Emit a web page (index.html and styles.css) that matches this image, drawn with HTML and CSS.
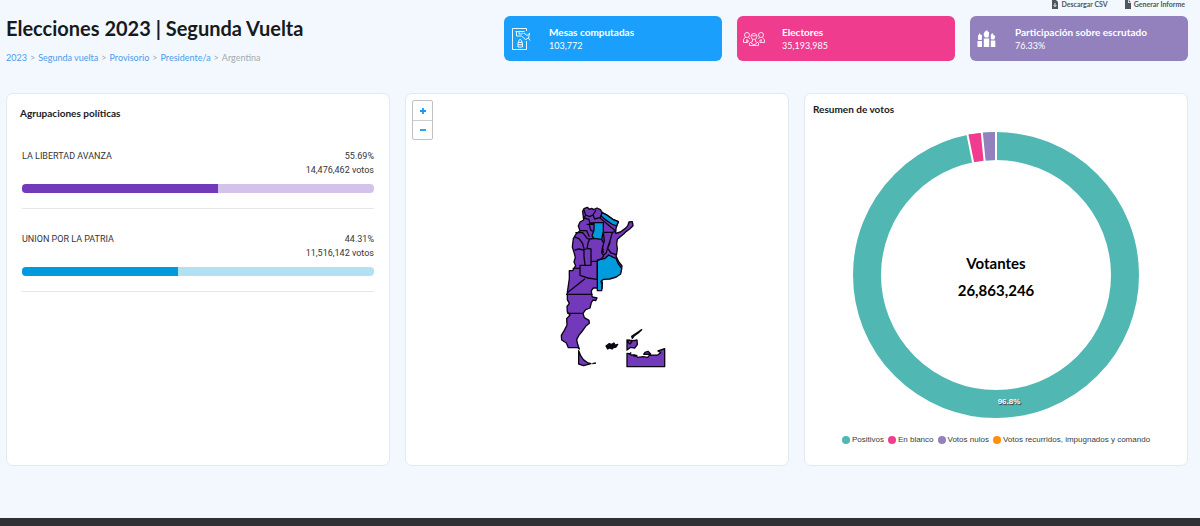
FILE: index.html
```html
<!DOCTYPE html>
<html lang="es">
<head>
<meta charset="utf-8">
<meta name="viewport" content="width=device-width, initial-scale=1">
<title>Elecciones 2023 | Segunda Vuelta</title>
<link rel="stylesheet" href="styles.css">
</head>
<body>
<div class="page">
  <header class="header">
    <div class="heading">
      <h1 class="title">Elecciones 2023 | Segunda Vuelta</h1>
      <nav class="crumbs" aria-label="Ruta">
        <a href="#">2023</a><span>&gt;</span><a href="#">Segunda vuelta</a><span>&gt;</span><a href="#">Provisorio</a><span>&gt;</span><a href="#">Presidente/a</a><span>&gt;</span><span>Argentina</span>
      </nav>
    </div>
    <div class="summary">
      <div class="actions">
        <button class="action" type="button">
          <svg width="8" height="9" viewBox="0 0 8 9"><path fill="#50565c" d="M1 0h4l2 2v7H1z"/><path fill="none" stroke="#fff" stroke-width=".9" d="M4 3v3.500M2.600 5.200L4 6.600 5.400 5.200"/></svg>
          Descargar CSV
        </button>
        <button class="action" type="button">
          <svg width="8" height="9" viewBox="0 0 8 9"><path fill="#50565c" d="M1 0h3v3h3v6H1zM4.700 0L7 2.300H4.700z"/></svg>
          Generar Informe
        </button>
      </div>
      <div class="stats">
        <section class="stat stat-blue">
          <svg class="stat-icon" width="24" height="24" viewBox="-1 0 24 24" fill="none" stroke="#fff" stroke-width=".9"><path d="M16.500 4V1.500H2.500v21h14V14M5.500 4.500h9M6.500 4.500v4.500h5M9 5v2h3M12 5.500l1.500 1.500M11.500 9l4 3.500 3-1.500 1-4M14 6l3 2.500 3-2.500M18.500 11l1.500 2.500"/><path d="M8 15.500h4.400v4.500H8zM8.700 15.500v-1.500l1.500-2 1.500 2v1.500M8 17.700h4.400"/></svg>
          <div><h2>Mesas computadas</h2><p>103,772</p></div>
        </section>
        <section class="stat stat-pink">
          <svg class="stat-icon" width="24" height="24" viewBox="0 0 24 24" fill="none" stroke="#fff" stroke-width=".8"><circle cx="5" cy="8" r="2.500"/><circle cx="19" cy="8" r="2.500"/><circle cx="12" cy="9.500" r="3"/><path d="M3.500 10l-2 2.500v3H6M6.500 10.500l1.500 1.500M17.500 10.500L16.500 12M20.500 10.500l2 2.500v2.500h-5M10.500 12.500v2L7.500 16v2.500h9V16l-3-1.500v-2M9 16l3 2 3-2M5 12v3M19 12v2M9.500 8.500l2 .5 3-.5M4 14h3M17 14h3"/></svg>
          <div><h2>Electores</h2><p>35,193,985</p></div>
        </section>
        <section class="stat stat-purple">
          <svg class="stat-icon" width="24" height="24" viewBox="0 0 24 24" fill="#fff"><path d="M3 12V8.500l1-1v-1h1.200v1L7 8v3.500L6.500 13H3.500zM2.500 14h4.500v6H2.500zM8.800 8.500V6l1-1V4.300h1.200v-.700h1.500V4.300l1.500 1v1.500L13.500 10.500H10zM8.800 11.500h5.400V20H8.800zM15.800 11V8l1-1.500h1.500v1.500l2 1-1 3.500h-3zM15.800 13.500h4.500V20h-4.500z"/></svg>
          <div><h2>Participación sobre escrutado</h2><p>76.33%</p></div>
        </section>
      </div>
    </div>
  </header>

  <main class="panels">
    <section class="panel parties">
      <h2 class="panel-title">Agrupaciones políticas</h2>
      <div class="party-list">
        <article class="party">
          <div class="party-row"><span>LA LIBERTAD AVANZA</span><span class="votes">55.69%<br>14,476,462 votos</span></div>
          <div class="bar bar-violet"><div class="fill" style="width:55.69%"></div></div>
        </article>
        <article class="party">
          <div class="party-row"><span>UNION POR LA PATRIA</span><span class="votes">44.31%<br>11,516,142 votos</span></div>
          <div class="bar bar-cyan"><div class="fill" style="width:44.31%"></div></div>
        </article>
      </div>
    </section>

    <section class="panel map" aria-label="Mapa de Argentina">
      <div class="zoom">
        <button type="button" aria-label="Acercar"><svg width="8" height="8" viewBox="0 0 8 8"><path d="M4 1v6M1 4h6" stroke="#1b98f0" stroke-width="1.800"/></svg></button>
        <button type="button" aria-label="Alejar"><svg width="8" height="8" viewBox="0 0 8 8"><path d="M1 4h6" stroke="#1b98f0" stroke-width="1.800"/></svg></button>
      </div>
      <svg class="country" width="146" height="175" viewBox="-78 0 438 525" fill="#7339bb" stroke="#0b0612" stroke-width="4" stroke-linejoin="round">
        <path d="M98 34l4-8 10-4 6 6 7-3 6 4 10-5 10 5 6 9 12 6 20 14 16 7-5 13-2 8-1 14 14-4 14-10 8-8 4-12 10-1 2 12-10 10-10 7-8 8-10 8-9 8-2 14 2 14-2 16-2 6 8 17 10 13-3 17-13 9-20 7-18 1-8 6 3 10-1 18-14-2-12 0-6 8 1 12 2 7 14 3-4 8-8-2-5 8-4 16-13 5-8 11 4 13 14 8 1 9-11 9-10 14-11 14-6 12 3 14 5 14-4-4-29 0-6-14-14-9-1-14 9-15 8-16-1-19 10-11-8-9-1-17 7-9-6-11 0-22 3-20 3-21 0-24 10 0 9-15-5-11 4-14-4-15-5-16 3-25 8-14 12-10-5-14 5-12 11-6z"/>
        <g fill="#009bdd"><path d="M156 38l14 7 18 13 17 7-5 13-15-6-20-14-12-10z"/><path d="M132 68h28v26l-5 24-24-3-5-8 6-17z"/><path d="M142 180l22-4 12-11 14 7 8 3 6 15 11 15-3 17-13 9-20 6-18 1-8 6 3 10-1 18h-13z"/></g>
        <path fill="none" d="M102 30l5 15 12 5 10-5 9-15M107 45l-5 9 15 4 2 11 14 0M129 45l5 12 16-4 5-8M150 54l46 38M110 73h22M118 75l4 15 6 4M90 92l20 0 8 18M76 98l22 0 14 18 7 1M119 117l-5 12-3 18M72 110l15 6 10 13 5 16M74 150l13-3 14 3 8-3M119 117l16-2M155 118l5 10M160 97h27l10-3M160 97l3 25-5 20 2 17M187 97l-6 22-8 24-4 15-9 8M158 138l-3 20 6 10-6 8-13 6M102 145l0 24 3 27h18v-49l-14-2M123 184h19v55M123 196H90v30l24 8 26 4M68 205h22M90 226l28 10M105 236l-53 42M181 125l-8 20 10 14 16 5M48 283h80M52 340h46"/>
        <path d="M86 452v40l15 5 22-6-9-2-14-10-8-12zM127 491l11-2"/>
        <path fill="#0b0612" d="M168 438l10-7 6 3 8-5 3 7 8-3-5 8-8 2-4 4-7-3-6 3z"/>
        <path d="M231 420l20 2 10-2 1 14-8 10-12-2-11 8zM232 425l6-5 8 4-6 8zM247 415l-2-6 15-10 15-10-8 8-14 10zM231 460v40h113v-54l-20 7 8 5-9 7-25 1-5 6-14-2-16 2-8-7-12 0-6-4zM281 463l4-6 9-3 8 8zM236 463l8-5M250 468l12-2"/>
      </svg>
    </section>

    <section class="panel results">
      <h2 class="panel-title">Resumen de votos</h2>
      <svg class="donut" width="288" height="288" viewBox="-144 -144 288 288" role="img" aria-label="Votantes 26,863,246">
        <g fill="none" stroke-width="28" transform="rotate(-90)">
          <circle r="129" pathLength="360" stroke="#51b7b2"/>
          <circle r="129" pathLength="360" stroke="#ef3c8e" stroke-dasharray="6 354" stroke-dashoffset="-348.500"/>
          <circle r="129" pathLength="360" stroke="#9281bd" stroke-dasharray="5.700 354.300" stroke-dashoffset="-354.300"/>
        </g>
        <g stroke="#fff" stroke-width="2"><path d="M0-144v30"/><path d="M0-144v30" transform="rotate(-5.700)"/><path d="M0-144v30" transform="rotate(-11.500)"/></g>
        <g text-anchor="middle"><text class="total" y="-6">Votantes</text><text class="total" y="21">26,863,246</text><text class="share" x="13" y="129">96.8%</text></g>
      </svg>
      <ul class="legend">
        <li><i class="dot teal"></i>Positivos</li>
        <li><i class="dot pink"></i>En blanco</li>
        <li><i class="dot purple"></i>Votos nulos</li>
        <li><i class="dot orange"></i>Votos recurridos, impugnados y comando</li>
      </ul>
    </section>
  </main>
  <footer class="footer"></footer>
</div>
</body>
</html>
```
FILE: styles.css
```css
* { box-sizing: border-box; }
body, h1, h2, p, ul { margin: 0; padding: 0; }
body { background: #f3f8fe; color: #171a1d; font-family: Lato, "Open Sans", sans-serif; }
button { font: inherit; color: inherit; border: 0; background: none; padding: 0; }
svg { display: block; flex: none; }

.page { min-height: 100vh; display: flex; flex-direction: column; }
.header { display: grid; grid-template-columns: 498fr 684fr; padding: 0 12px 0 6px; }
.heading { padding-top: 16px; }
.title { font-size: 20px; line-height: 24px; font-weight: 700; white-space: nowrap; }
.crumbs { display: flex; gap: 3px; margin-top: 10px; font-size: 9px; line-height: 16px; color: #a5a9ae; white-space: nowrap; }
.crumbs a { color: #4a9cea; text-decoration: none; }

.actions { display: flex; justify-content: flex-end; gap: 16px; height: 8px; padding-right: 3px; }
.action { display: flex; align-items: center; gap: 2px; font-size: 7px; line-height: 8px; font-weight: 700; color: #50565c; white-space: nowrap; }
.stats { display: grid; grid-template-columns: repeat(3, 1fr); gap: 15px; margin-top: 8px; }
.stat { display: flex; align-items: center; gap: 16px; min-height: 45px; padding: 0 5px; border-radius: 6px; color: #fff; white-space: nowrap; }
.stat h2 { font-size: 10px; line-height: 13px; font-weight: 700; }
.stat p { font-size: 9px; line-height: 13px; }
.stat-blue { background: #1a9ffc; }
.stat-pink { background: #ef3c8e; }
.stat-purple { background: #9281bd; }

.panels { display: grid; grid-template-columns: repeat(3, 1fr); gap: 15px; margin-top: 27px; padding: 0 12px 0 6px; }
.panel { min-height: 373px; background: #fff; border: 1px solid #e3e9f1; border-radius: 7px; }
.panel-title { font-size: 10px; line-height: 14px; font-weight: 700; }

.parties { padding: 12px 15px 12px 13px; }
.party-list { padding: 29px 0 0 2px; font-family: Roboto, sans-serif; font-size: 9px; line-height: 14px; color: #33363a; }
.party { padding-bottom: 15px; margin-bottom: 23px; border-bottom: 1px solid #e4e6ea; }
.party-row { display: flex; justify-content: space-between; }
.votes { text-align: right; }
.bar { height: 9px; margin-top: 7px; border-radius: 4px; overflow: hidden; }
.fill { height: 100%; }
.bar-violet { background: #d3c3ea; }
.bar-violet .fill { background: #7339bb; }
.bar-cyan { background: #b2e1f5; }
.bar-cyan .fill { background: #009bdd; }

.map { padding: 6px; }
.zoom { width: 21px; border: 1px solid #bfc2c5; border-radius: 2px; }
.zoom button { display: flex; width: 100%; height: 19px; align-items: center; justify-content: center; }
.zoom button + button { border-top: 1px solid #ccc; }
.country { margin: 60px auto 0; }

.results { padding: 8px; }
.donut { margin: 15px auto 0; }
.total { font-size: 15px; font-weight: 700; fill: #000; }
.share { font: 700 8px "Liberation Sans", sans-serif; fill: #fff; text-shadow: 1px 1px 1px #333; }
.legend { display: flex; justify-content: center; gap: 4px; margin-top: 15px; list-style: none; font-family: "Liberation Sans", sans-serif; font-size: 8px; line-height: 12px; color: #373d3f; white-space: nowrap; }
.legend li { display: flex; align-items: center; gap: 2px; }
.dot { width: 8px; height: 8px; border-radius: 50%; }
.teal { background: #51b7b2; }
.pink { background: #ef3c8e; }
.purple { background: #9281bd; }
.orange { background: #ff8f0c; }
.footer { height: 8px; margin-top: auto; background: #303133; }
```
